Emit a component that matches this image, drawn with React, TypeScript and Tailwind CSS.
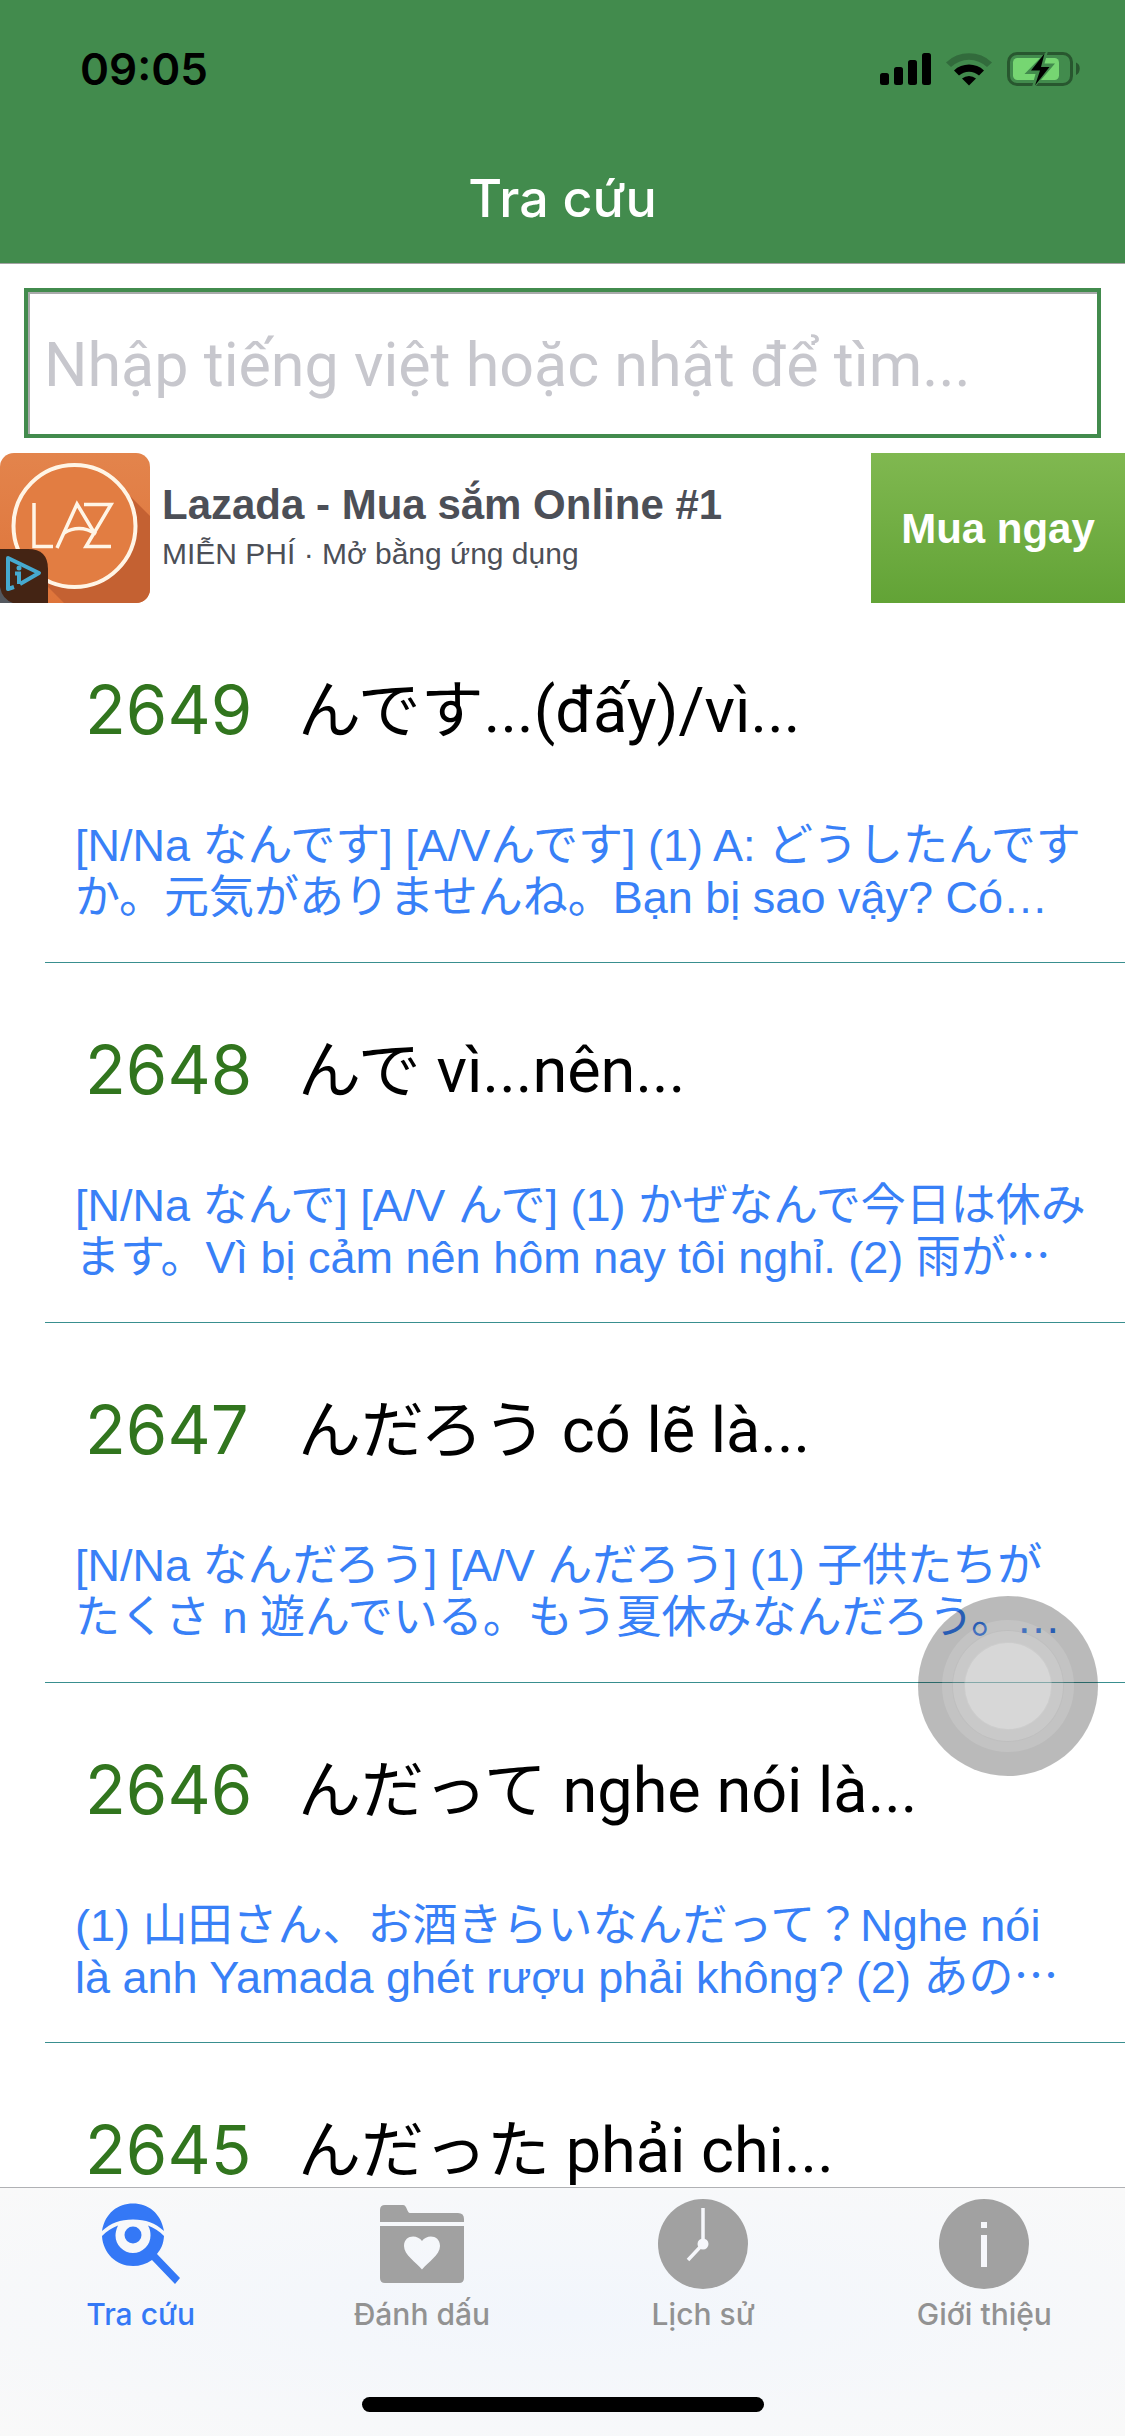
type Entry = { id: number; title: string; lines: string[] };

const entries: Entry[] = [
  {
    id: 2649,
    title: "んです...(đấy)/vì...",
    lines: ["[N/Na なんです] [A/Vんです] (1) A: どうしたんです", "か。元気がありませんね。Bạn bị sao vậy? Có…"],
  },
  {
    id: 2648,
    title: "んで vì...nên...",
    lines: ["[N/Na なんで] [A/V んで] (1) かぜなんで今日は休み", "ます。Vì bị cảm nên hôm nay tôi nghỉ. (2) 雨が⋯"],
  },
  {
    id: 2647,
    title: "んだろう có lẽ là...",
    lines: ["[N/Na なんだろう] [A/V んだろう] (1) 子供たちが", "たくさ n 遊んでいる。もう夏休みなんだろう。…"],
  },
  {
    id: 2646,
    title: "んだって nghe nói là...",
    lines: ["(1) 山田さん、お酒きらいなんだって？Nghe nói", "là anh Yamada ghét rượu phải không? (2) あの⋯"],
  },
  { id: 2645, title: "んだった phải chi...", lines: [] },
];

function SignalIcon() {
  return (
    <svg className="h-8 w-[51px]" viewBox="0 0 51 32" aria-hidden="true">
      <rect x="0" y="20" width="9" height="12" rx="2.5" />
      <rect x="14" y="14" width="9" height="18" rx="2.5" />
      <rect x="28" y="7" width="9" height="25" rx="2.5" />
      <rect x="42" y="0" width="9" height="32" rx="2.5" />
    </svg>
  );
}

function WifiIcon() {
  return (
    <svg className="h-[34px] w-[46px]" viewBox="0 0 46 34" aria-hidden="true">
      <path d="M0 10.5A33 33 0 0 1 46 10.5L41 15A26 26 0 0 0 5 15Z" fill="#326b3c" />
      <path d="M8 18.5A22 22 0 0 1 38 18.5L33 23.5A15 15 0 0 0 13 23.5Z" />
      <path d="M16 26.5A11 11 0 0 1 30 26.5L23 33.5Z" />
    </svg>
  );
}

function BatteryIcon() {
  return (
    <svg className="h-[34px] w-[74px]" viewBox="0 0 74 34" aria-hidden="true">
      <rect x="1.5" y="1.5" width="63" height="31" rx="8.5" fill="none" stroke="#28572f" strokeWidth="3" />
      <rect x="6" y="6" width="46" height="22" rx="4.5" fill="#76d672" />
      <path d="M69 10.5C74 12 74 21 69 23Z" fill="#28572f" />
      <path d="M40 -1L17.5 22H28.5L25 35H28L48 11.5H37.5L41 -1Z" fill="#428b4d" />
      <path d="M37.5 1.5L24 18.5H33L28 33.5L42.5 15H34Z" />
    </svg>
  );
}

function LazadaLogo() {
  return (
    <svg className="size-[150px]" viewBox="0 0 150 150" role="img" aria-label="Lazada">
      <defs>
        <clipPath id="tile"><rect width="150" height="150" rx="14" /></clipPath>
        <linearGradient id="orange" x1="0" y1="0" x2="0" y2="1">
          <stop offset="0" stopColor="#e3844c" />
          <stop offset="1" stopColor="#de743a" />
        </linearGradient>
      </defs>
      <rect y="110" width="40" height="40" fill="#54585f" />
      <g clipPath="url(#tile)">
        <rect width="150" height="150" fill="url(#orange)" />
        <path d="M119 32L150 63V150H64L26 112L74 135L120 115L136 73Z" fill="#c46132" />
        <circle cx="74.5" cy="73" r="61" fill="#e27d42" stroke="#fff5e6" strokeWidth="4" />
      </g>
      <g fill="none" stroke="#fff5e6" strokeWidth="3.5">
        <path d="M34 50V93.5H53" />
        <path d="M57 95L77 51L95 81" />
        <path d="M64 80C74 74 85 74 96 81" />
        <path d="M84 51.5H111L86 93.5H111" />
      </g>
      <path d="M0 96H28Q48 96 48 116V150H0Z" fill="#442414" />
      <path d="M0 134Q2 146 13 150H0Z" fill="#54585f" />
      <path d="M14 134L8 136V105L39 120L20 131" fill="none" stroke="#46a9cf" strokeWidth="4" strokeLinejoin="round" />
      <circle cx="19" cy="115" r="2.5" fill="#46a9cf" />
      <path d="M15 120.5H19V131" fill="none" stroke="#46a9cf" strokeWidth="4" />
    </svg>
  );
}

function SearchEyeIcon() {
  return (
    <svg className="size-[90px]" viewBox="5 0 90 90" aria-hidden="true">
      <path d="M11 32C14 14 27 4.5 42 4.5S70 14 73 32C64 24 55 20.5 42 20.5S20 24 11 32Z" fill="#3478f6" />
      <path d="M11 37C16 32 21 29 27 26.5C25 31 24.5 34 24.5 36.5A17.5 17.5 0 0 0 59.5 36.5C59.5 33 59 30 57 26.5C63 29 68 32 73 37C72.500 45 70 50 66 55L89 79L84 85L61 61C55 65 49 67 42 67C25 67 12 54 11 37Z" fill="#3478f6" />
      <circle cx="42" cy="36" r="8.5" fill="#3478f6" />
    </svg>
  );
}

function FolderHeartIcon() {
  return (
    <svg className="size-[90px]" viewBox="0 0 90 90" aria-hidden="true" fill="#a1a1a1">
      <path d="M3 23V11Q3 6 8 6H26C30 6 30 14 33 14H81Q87 14 87 20V23Z" />
      <path
        fillRule="evenodd"
        d="M3 27H87V79Q87 84 82 84H8Q3 84 3 79ZM45 70.5C39 63 27 56 27 47C27 36 40 35 45 42C50 35 63 36 63 47C63 56 51 63 45 70.5Z"
      />
    </svg>
  );
}

function ClockIcon() {
  return (
    <svg className="size-[90px]" viewBox="0 0 90 90" aria-hidden="true">
      <circle cx="45" cy="45" r="45" fill="#a1a1a1" />
      <path d="M45 9V45L30 61" fill="none" stroke="#f6f7fb" strokeWidth="3.5" />
      <circle cx="45" cy="45" r="5.5" fill="#f6f7fb" />
    </svg>
  );
}

function InfoIcon() {
  return (
    <svg className="size-[90px]" viewBox="0 0 90 90" aria-hidden="true">
      <circle cx="45" cy="45" r="45" fill="#a1a1a1" />
      <path d="M42 23H48V29H42ZM42 36H48V68H42Z" fill="#f6f7fb" />
    </svg>
  );
}

const tabs = [
  { label: "Tra cứu", icon: <SearchEyeIcon />, active: true },
  { label: "Đánh dấu", icon: <FolderHeartIcon />, active: false },
  { label: "Lịch sử", icon: <ClockIcon />, active: false },
  { label: "Giới thiệu", icon: <InfoIcon />, active: false },
];

export default function App() {
  return (
    <div className="relative flex h-screen flex-col overflow-hidden bg-white font-['Inter','Noto_Sans_CJK_JP',sans-serif]">
      <header className="shrink-0 border-b border-[#a3a3a3] bg-[#428b4d]">
        <div className="flex h-[138px] items-center justify-between pr-11 pl-20">
          <time className="text-[44px] font-semibold text-black">09:05</time>
          <div className="flex items-center gap-[15px]">
            <SignalIcon />
            <WifiIcon />
            <BatteryIcon />
          </div>
        </div>
        <h1 className="flex h-[125px] items-center justify-center pb-1 text-[52px] font-medium text-white">Tra cứu</h1>
      </header>

      <div className="shrink-0 px-6 pt-6 pb-[15px]">
        <input
          type="search"
          aria-label="Tìm kiếm"
          placeholder="Nhập tiếng việt hoặc nhật để tìm..."
          className="block h-[150px] w-full border-4 border-[#428b4d] bg-white px-4 pt-1 font-['Roboto',sans-serif] text-[61px] text-black shadow-[inset_2px_2px_0_#a9aaab] outline-none placeholder:text-[#c7c7cd] placeholder:opacity-100"
        />
      </div>

      <aside className="flex h-[150px] shrink-0 items-stretch font-['Liberation_Sans',sans-serif]">
        <LazadaLogo />
        <div className="flex min-w-0 flex-1 flex-col justify-center pl-3 text-[#4c4f57]">
          <strong className="text-[42px] leading-[52px]">Lazada - Mua sắm Online #1</strong>
          <span className="text-[30px] leading-[46px]">MIỄN PHÍ · Mở bằng ứng dụng</span>
        </div>
        <button className="w-[254px] bg-linear-to-b from-[#80b850] to-[#62a336] text-[42px] font-bold text-white">Mua ngay</button>
      </aside>

      <main className="min-h-0 flex-1 overflow-hidden">
        <ul>
          {entries.map((e) => (
            <li key={e.id} className="ml-[45px] h-[360px] border-b border-[#398f8f] pt-15 pl-[30px]">
              <h2 className="flex h-[92px] items-center leading-none font-normal">
                <span className="w-[223px] pl-2.5 text-[67px] text-[#31751e]">{e.id}</span>
                <span className="pt-0.5 font-['Roboto','Noto_Sans_CJK_JP',sans-serif] text-[63px] whitespace-nowrap text-black">{e.title}</span>
              </h2>
              <p className="pt-[65px] font-['Liberation_Sans','Noto_Sans_CJK_JP',sans-serif] text-[45px] leading-[52px] text-[#3880f7]">
                {e.lines.map((line) => (
                  <span key={line} className="block whitespace-nowrap">{line}</span>
                ))}
              </p>
            </li>
          ))}
        </ul>
      </main>

      <nav className="flex h-[249px] shrink-0 flex-col items-center justify-between border-t border-[#b0b1b4] bg-radial from-[#f2f6fc] to-[#f9f9f9] pb-6">
        <div className="grid w-full grid-cols-4">
          {tabs.map((t) => (
            <a
              key={t.label}
              href="#"
              aria-current={t.active ? "page" : undefined}
              className={
                t.active
                  ? "flex flex-col items-center pt-[11px] text-[#3478f6]"
                  : "flex flex-col items-center pt-[11px] text-[#929292]"
              }
            >
              {t.icon}
              <span className="pt-1 text-[30px] leading-[42px] font-medium">{t.label}</span>
            </a>
          ))}
        </div>
        <div className="h-[15px] w-[402px] rounded-full bg-black" />
      </nav>

      <button
        aria-label="AssistiveTouch"
        className="absolute top-[1596px] right-[27px] flex size-[180px] items-center justify-center rounded-full bg-black/27"
      >
        <span className="flex size-[132px] items-center justify-center rounded-full bg-white/13">
          <span className="flex size-[112px] items-center justify-center rounded-full border border-black/5 bg-white/10">
            <span className="size-[88px] rounded-full border border-black/5 bg-white/27" />
          </span>
        </span>
      </button>
    </div>
  );
}
